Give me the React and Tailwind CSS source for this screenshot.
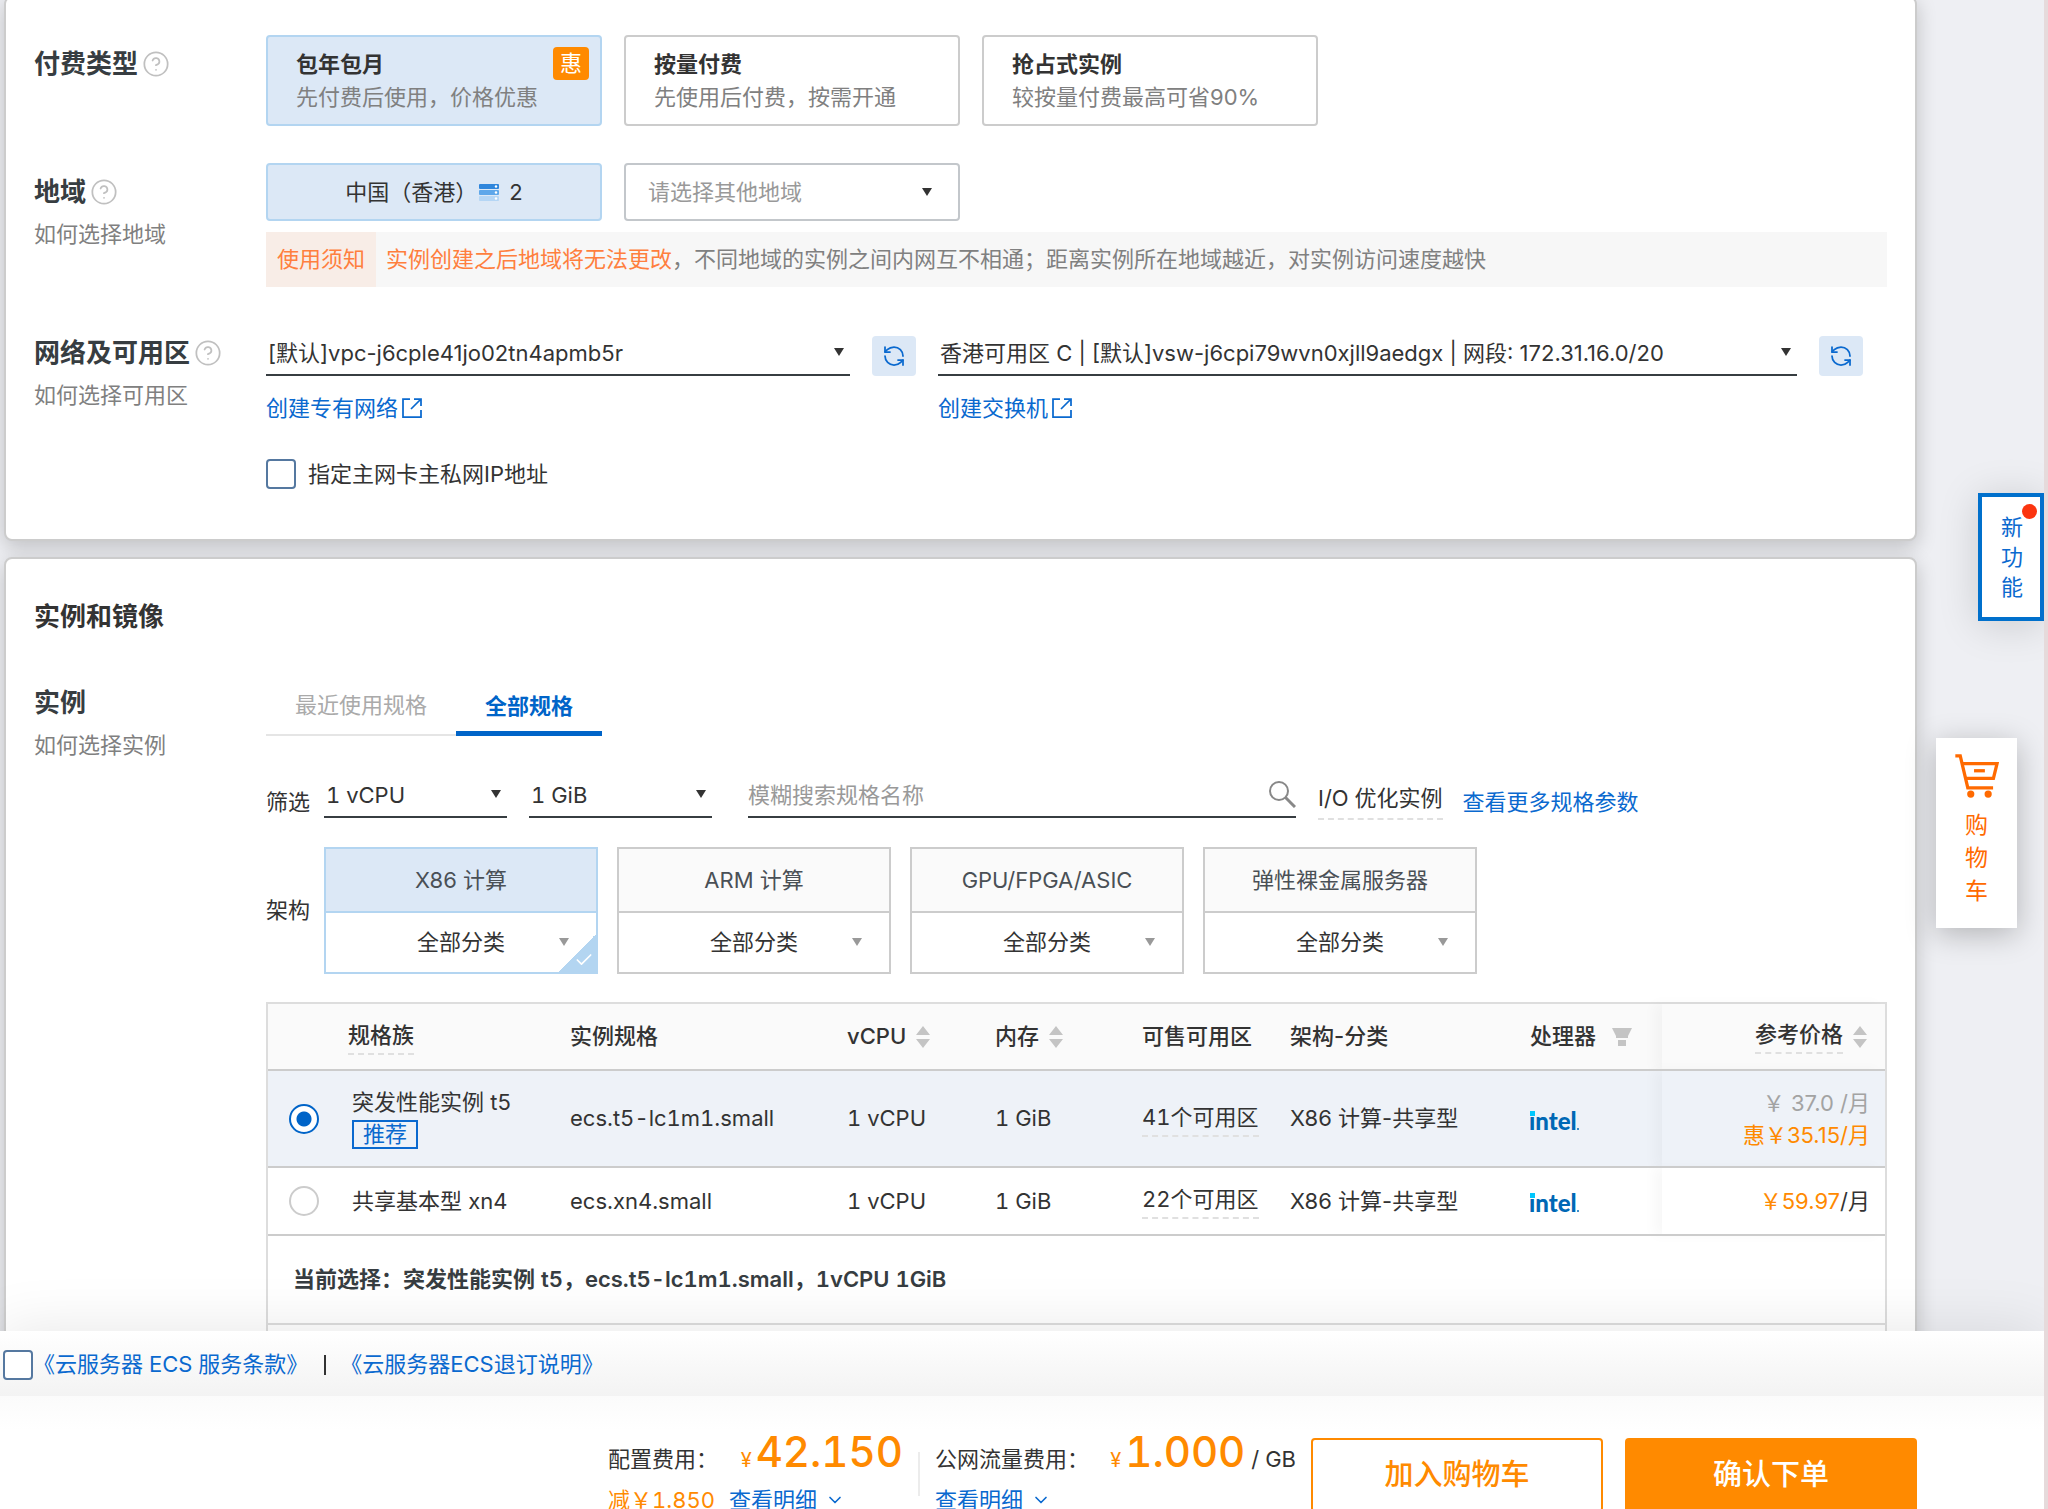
import React, { useState } from "react";
import { CircleQuestionMark, RefreshCcw, ChevronDown, Check } from "lucide-react";

const payTypes = [
  { id: "prepaid", title: "包年包月", desc: "先付费后使用，价格优惠", sale: true },
  { id: "postpaid", title: "按量付费", desc: "先使用后付费，按需开通" },
  { id: "spot", title: "抢占式实例", desc: "较按量付费最高可省90%" },
];

const archTypes = ["X86 计算", "ARM 计算", "GPU/FPGA/ASIC", "弹性裸金属服务器"];

const specs = [
  {
    id: "ecs.t5-lc1m1.small",
    family: "突发性能实例 t5",
    recommended: true,
    zones: "41个可用区",
    oldPrice: "￥ 37.0 /月",
    price: "惠￥35.15/月",
  },
  {
    id: "ecs.xn4.small",
    family: "共享基本型 xn4",
    zones: "22个可用区",
    price: "￥59.97",
    unit: "/月",
  },
];

const Caret = ({ className = "" }) => (
  <svg viewBox="0 0 10 8" className={`pointer-events-none h-2 w-2.5 ${className}`} fill="currentColor" aria-hidden="true">
    <path d="M0 0h10L5 8z" />
  </svg>
);

const ExternalIcon = () => (
  <svg viewBox="0 0 20 20" className="h-5 w-5" fill="none" stroke="currentColor" strokeWidth="1.75" aria-hidden="true">
    <path d="M8 1H1v18h18v-7" />
    <path d="M12 1h7v7M19 1 9 11" />
  </svg>
);

const ServerIcon = () => (
  <svg viewBox="0 0 20 18" className="mt-0.5 h-[18px] w-5" aria-hidden="true">
    <rect width="20" height="5" rx="1" fill="#2f86dc" />
    <rect y="6" width="20" height="5" rx="1" fill="#5ea7ea" />
    <rect y="12" width="20" height="5" rx="1" fill="#b5d6f5" />
    <circle cx="17" cy="2.5" r="1.2" fill="#fff" />
    <circle cx="17" cy="8.5" r="1.2" fill="#fff" />
    <circle cx="17" cy="14.5" r="1.2" fill="#fff" />
  </svg>
);

const SearchIcon = () => (
  <svg viewBox="0 0 28 28" className="h-7 w-7" fill="none" stroke="currentColor" strokeWidth="2" aria-hidden="true">
    <circle cx="11" cy="11" r="9" />
    <path d="M17.500 17.500 27 27" strokeWidth="3" />
  </svg>
);

const CartIcon = () => (
  <svg viewBox="0 0 132 134" className="h-11 w-11" fill="none" stroke="currentColor" strokeWidth="10" aria-hidden="true">
    <path d="M0 6h15l23 97h77" />
    <path d="M23 29h104l-11 45H32" />
    <path d="M57 51h33" />
    <circle cx="47" cy="122" r="11" fill="currentColor" stroke="none" />
    <circle cx="100" cy="122" r="11" fill="currentColor" stroke="none" />
  </svg>
);

const SortIcon = () => (
  <svg viewBox="0 0 14 22" className="h-[22px] w-3.5 text-[#c4c4c4]" fill="currentColor" aria-hidden="true">
    <path d="M7 0l7 9H0zM7 22l7-9H0z" />
  </svg>
);

const FilterIcon = () => (
  <svg viewBox="0 0 20 18" className="h-[18px] w-5 text-[#c4c4c4]" fill="currentColor" aria-hidden="true">
    <path d="M0 0h20l-4 8v2H4V8zM6 12h8v6H6z" />
  </svg>
);

const IntelLogo = () => (
  <svg viewBox="0 0 60 34" className="h-[34px] w-[60px]" aria-label="intel">
    <text x="-1" y="28" fontFamily="Lato, sans-serif" fontSize="24" fontWeight="900" fill="#0068b5">
      intel
    </text>
    <rect x="0" y="9" width="5" height="5" fill="#00c7fd" />
    <circle cx="48" cy="27" r="1" fill="#0068b5" />
  </svg>
);

const RowLabel = ({ title, help, link, className = "" }) => (
  <div className={`w-[232px] shrink-0 ${className}`}>
    <div className="flex items-center gap-1 text-[26px] leading-9 font-bold text-[#373d41]">
      {title}
      {help && <CircleQuestionMark className="h-7 w-7 text-[#c0c0c0]" strokeWidth={1.5} />}
    </div>
    {link && (
      <a href="#" className="mt-2 block leading-8 text-[#808080]">
        {link}
      </a>
    )}
  </div>
);

const LineSelect = ({ label, value, className = "" }) => (
  <div className={`relative border-b-2 border-[#373d41] ${className}`}>
    <select aria-label={label} className="block h-[38px] w-full appearance-none bg-transparent px-0.5 pb-1 outline-none">
      <option>{value}</option>
    </select>
    <Caret className="absolute top-3 right-1.5" />
  </div>
);

const RefreshButton = () => (
  <button type="button" aria-label="刷新" className="flex h-10 w-11 shrink-0 items-center justify-center rounded-sm bg-[#dce8f6] text-[#0a69cf]">
    <RefreshCcw className="h-6 w-6" strokeWidth={1.75} />
  </button>
);

const BasicPanel = () => {
  const [pay, setPay] = useState("prepaid");

  return (
    <section className="-mt-1 rounded-lg border-2 border-[#cccccc] bg-white px-7 pt-[37px] pb-[49px] shadow-[0_6px_20px_rgba(0,0,0,0.2)]">
      <div className="flex">
        <RowLabel title="付费类型" help className="pt-[11px]" />
        <div className="flex gap-[22px]">
          {payTypes.map((item) => (
            <button
              key={item.id}
              type="button"
              onClick={() => setPay(item.id)}
              className={`relative w-[336px] rounded-sm border-2 px-7 pt-[11px] pb-2.5 text-left ${
                pay === item.id ? "border-[#b3d5f1] bg-[#dce8f6]" : "border-[#cccccc] bg-white"
              }`}
            >
              <span className="block leading-8 font-bold text-[#333333]">{item.title}</span>
              <span className="block leading-[34px] text-[#808080]">{item.desc}</span>
              {item.sale && (
                <span className="absolute top-2.5 right-[11px] flex h-[33px] w-9 items-center justify-center rounded-sm bg-[#ff8a00] text-white">
                  惠
                </span>
              )}
            </button>
          ))}
        </div>
      </div>

      <div className="mt-[37px] flex">
        <RowLabel title="地域" help link="如何选择地域" className="pt-[11px]" />
        <div className="min-w-0 flex-1">
          <div className="flex gap-[22px]">
            <button
              type="button"
              className="flex h-[58px] w-[336px] items-center justify-center gap-2.5 rounded-sm border-2 border-[#b3d5f1] bg-[#dce8f6]"
            >
              <span className="flex items-center gap-0.5">
                中国（香港）
                <ServerIcon />
              </span>
              2
            </button>
            <div className="relative h-[58px] w-[336px] rounded-sm border-2 border-[#c3c7cb]">
              <select aria-label="地域" className="h-full w-full appearance-none bg-transparent px-[22px] text-[#999999] outline-none">
                <option>请选择其他地域</option>
              </select>
              <Caret className="absolute top-[23px] right-[26px]" />
            </div>
          </div>
          <div className="mt-[11px] flex h-[55px] items-center bg-[#f7f7f7] text-[#808080]">
            <span className="flex h-full w-[110px] items-center justify-center bg-[#f8ede7] text-[#ff7f3e]">使用须知</span>
            <p className="pl-2.5">
              <span className="text-[#ff7f3e]">实例创建之后地域将无法更改</span>
              ，不同地域的实例之间内网互不相通；距离实例所在地域越近，对实例访问速度越快
            </p>
          </div>
        </div>
      </div>

      <div className="mt-12 flex">
        <RowLabel title="网络及可用区" help link="如何选择可用区" />
        <div className="min-w-0 flex-1 pt-px">
          <div className="flex">
            <div className="flex w-[650px] shrink-0 gap-[22px]">
              <LineSelect label="专有网络" value="[默认]vpc-j6cple41jo02tn4apmb5r" className="w-[585px]" />
              <RefreshButton />
            </div>
            <div className="ml-[22px] flex flex-1 gap-[22px] pr-6">
              <LineSelect
                label="交换机"
                value="香港可用区 C | [默认]vsw-j6cpi79wvn0xjll9aedgx | 网段: 172.31.16.0/20"
                className="flex-1"
              />
              <RefreshButton />
            </div>
          </div>
          <div className="mt-4 flex leading-8 text-[#0a69cf]">
            <a href="#" className="flex w-[672px] shrink-0 items-center gap-1">
              创建专有网络
              <ExternalIcon />
            </a>
            <a href="#" className="flex items-center gap-1">
              创建交换机
              <ExternalIcon />
            </a>
          </div>
          <label className="mt-[34px] flex items-center gap-3 leading-8">
            <input type="checkbox" className="h-[30px] w-[30px] appearance-none rounded-sm border-2 border-[#5578a0] bg-white checked:bg-[#0064c8]" />
            指定主网卡主私网IP地址
          </label>
        </div>
      </div>
    </section>
  );
};

const SpecTable = () => {
  const [selected, setSelected] = useState("ecs.t5-lc1m1.small");
  const edge = "shadow-[-8px_0_12px_rgba(0,0,0,0.03)]";

  return (
    <div className="mt-7 border-2 border-[#dddddd]">
      <table className="w-full table-fixed border-collapse text-left">
        <colgroup>
          <col className="w-[80px]" />
          <col className="w-[222px]" />
          <col className="w-[277px]" />
          <col className="w-[148px]" />
          <col className="w-[147px]" />
          <col className="w-[148px]" />
          <col className="w-[240px]" />
          <col className="w-[132px]" />
          <col />
        </colgroup>
        <thead className="bg-[#fafafa]">
          <tr className="h-[66px] border-b-2 border-[#cccccc] [&>th]:p-0 [&>th]:font-medium">
            <th aria-label="选择" />
            <th>
              <span className="inline-block border-b-2 border-dashed border-[#e0e0e0] pb-1 leading-7">规格族</span>
            </th>
            <th>实例规格</th>
            <th>
              <span className="flex items-center gap-2.5">
                vCPU <SortIcon />
              </span>
            </th>
            <th>
              <span className="flex items-center gap-2.5">
                内存 <SortIcon />
              </span>
            </th>
            <th>可售可用区</th>
            <th>架构-分类</th>
            <th>
              <span className="flex items-center gap-4">
                处理器 <FilterIcon />
              </span>
            </th>
            <th className={edge}>
              <span className="flex items-center justify-end gap-2.5 pr-[18px]">
                <span className="border-b-2 border-dashed border-[#e0e0e0] pb-1 leading-7">参考价格</span>
                <SortIcon />
              </span>
            </th>
          </tr>
        </thead>
        <tbody>
          {specs.map((spec) => (
            <tr
              key={spec.id}
              className={`border-b-2 border-[#cccccc] [&>td]:p-0 ${spec.recommended ? "h-[97px]" : "h-[68px]"} ${
                selected === spec.id ? "bg-[#eef2f8]" : "bg-white"
              }`}
            >
              <td>
                <input
                  type="radio"
                  name="spec"
                  aria-label={spec.id}
                  checked={selected === spec.id}
                  onChange={() => setSelected(spec.id)}
                  className="ml-[21px] block h-[30px] w-[30px] appearance-none rounded-full border-2 border-[#cccccc] bg-white checked:border-[#0064c8] checked:bg-[radial-gradient(circle,#0064c8_7px,#fff_8px)]"
                />
              </td>
              <td>
                <span className="block pl-1 leading-8">{spec.family}</span>
                {spec.recommended && (
                  <span className="mt-0.5 ml-1 inline-block border-2 border-[#0a69cf] px-[9px] align-top leading-[25px] text-[#0a69cf]">推荐</span>
                )}
              </td>
              <td className="tabular-nums">{spec.id}</td>
              <td className="tabular-nums">1 vCPU</td>
              <td className="tabular-nums">1 GiB</td>
              <td className="tabular-nums">
                <span className="inline-block border-b-2 border-dashed border-[#e0e0e0] pb-1 leading-7">{spec.zones}</span>
              </td>
              <td>X86 计算-共享型</td>
              <td>
                <IntelLogo />
              </td>
              <td className={`text-right ${edge}`}>
                <div className="pr-[15px] leading-8">
                  {spec.oldPrice && <span className="block text-[#a3a3a3]">{spec.oldPrice}</span>}
                  <span className="text-[#ff8a00]">{spec.price}</span>
                  {spec.unit}
                </div>
              </td>
            </tr>
          ))}
        </tbody>
      </table>
      <p className="border-b-2 border-[#dddddd] px-[25px] pt-[27px] pb-7 leading-8 font-semibold text-[#373d41] tabular-nums">
        当前选择：突发性能实例 t5，ecs.t5-lc1m1.small，1vCPU 1GiB
      </p>
      <div className="h-20" />
    </div>
  );
};

const InstancePanel = () => {
  const [arch, setArch] = useState(archTypes[0]);

  return (
    <section className="mt-4 rounded-lg border-2 border-[#cccccc] bg-white px-7 pt-10 shadow-[0_6px_20px_rgba(0,0,0,0.2)]">
      <h2 className="text-[26px] leading-9 font-bold">实例和镜像</h2>
      <div className="mt-[50px] flex">
        <RowLabel title="实例" link="如何选择实例" />
        <div className="min-w-0 flex-1">
          <div className="flex h-[51px]">
            <button type="button" className="w-[190px] border-b-2 border-[#e5e5e5] pb-2 text-[#aaaaaa]">
              最近使用规格
            </button>
            <button type="button" className="w-[146px] border-b-[5px] border-[#0064c8] pb-1 font-bold text-[#0064c8]">
              全部规格
            </button>
          </div>

          <div className="mt-[42px] flex items-start tabular-nums">
            <span className="w-[58px] pt-2 leading-8">筛选</span>
            <LineSelect label="vCPU" value="1 vCPU" className="w-[183px]" />
            <LineSelect label="内存" value="1 GiB" className="ml-[22px] w-[183px]" />
            <div className="ml-9 flex h-10 w-[548px] border-b-2 border-[#373d41]">
              <input
                type="text"
                aria-label="规格名称"
                placeholder="模糊搜索规格名称"
                className="min-w-0 flex-1 pb-1 outline-none placeholder:text-[#999999]"
              />
              <button type="button" aria-label="搜索" className="self-start pt-0.5 text-[#888888]">
                <SearchIcon />
              </button>
            </div>
            <span className="ml-[22px] border-b-2 border-dashed border-[#e0e0e0] pt-1 pb-1 leading-8">I/O 优化实例</span>
            <a href="#" className="ml-5 pt-2 leading-8 text-[#0a69cf]">
              查看更多规格参数
            </a>
          </div>

          <div className="mt-[27px] flex items-center">
            <span className="w-[58px]">架构</span>
            <div className="flex gap-[19px]">
              {archTypes.map((name) => {
                const active = arch === name;
                return (
                  <div key={name} className={`relative w-[274px] border-2 ${active ? "border-[#b3d5f1]" : "border-[#cccccc]"}`}>
                    <button
                      type="button"
                      onClick={() => setArch(name)}
                      className={`block h-16 w-full border-b-2 text-[#4a5056] ${
                        active ? "border-[#b3d5f1] bg-[#dce8f6]" : "border-[#cccccc] bg-[#fafafa]"
                      }`}
                    >
                      {name}
                    </button>
                    <select aria-label={name} className="block h-[59px] w-full appearance-none bg-white px-8 [text-align-last:center] outline-none">
                      <option>全部分类</option>
                    </select>
                    <Caret className="absolute right-[27px] bottom-[26px] text-[#999999]" />
                    {active && (
                      <span className="absolute right-0 bottom-0 flex h-[38px] w-[38px] items-end justify-end bg-[linear-gradient(135deg,transparent_50%,#b3d5f1_50%)] pr-0.5 pb-0.5">
                        <Check className="h-5 w-5 text-white" strokeWidth={2} />
                      </span>
                    )}
                  </div>
                );
              })}
            </div>
          </div>

          <SpecTable />
        </div>
      </div>
    </section>
  );
};

const FooterBar = () => (
  <footer className="relative z-10 bg-white tabular-nums shadow-[0_0_60px_rgba(0,0,0,0.1)]">
    <div className="flex h-[65px] items-center bg-linear-to-b from-white to-[#f3f3f3] pt-0.5 pl-[3px] text-[#0a69cf]">
      <input
        type="checkbox"
        aria-label="同意服务条款"
        className="h-[30px] w-[30px] appearance-none rounded-sm border-2 border-[#5578a0] bg-white checked:bg-[#0064c8]"
      />
      <a href="#">《云服务器 ECS 服务条款》</a>
      <span className="mr-3.5 ml-4 h-5 w-0.5 bg-[#333333]" />
      <a href="#">《云服务器ECS退订说明》</a>
    </div>
    <div className="flex h-[113px] items-start justify-end bg-linear-to-b from-[#fbfbfb] to-white to-30% pr-[127px]">
      <div className="w-[310px] pt-[31px]">
        <div className="flex items-baseline leading-[50px]">
          配置费用：
          <span className="ml-auto text-xl text-[#ff8a00]">¥</span>
          <span className="mr-[15px] ml-1 text-[42px] font-medium text-[#ff8a00]">42.150</span>
        </div>
        <div className="flex items-center leading-8 text-[#0a69cf]">
          <span className="mr-3.5 text-[#ff8a00]">减￥1.850</span>
          <a href="#" className="flex items-center gap-2">
            查看明细
            <ChevronDown className="h-5 w-5" strokeWidth={2} />
          </a>
        </div>
      </div>
      <span className="mt-14 h-11 w-0.5 bg-[#ececec]" />
      <div className="ml-[15px] w-[361px] pt-[31px]">
        <div className="flex items-baseline leading-[50px]">
          公网流量费用：
          <span className="ml-auto text-xl text-[#ff8a00]">¥</span>
          <span className="ml-1 text-[42px] font-medium text-[#ff8a00]">1.000</span>
          <span className="ml-1.5">/ GB</span>
        </div>
        <a href="#" className="flex items-center gap-2 leading-8 text-[#0a69cf]">
          查看明细
          <ChevronDown className="h-5 w-5" strokeWidth={2} />
        </a>
      </div>
      <button type="button" className="mt-[42px] ml-[15px] h-[74px] w-[292px] rounded-sm border-2 border-[#ff8a00] bg-white text-[29px] font-medium text-[#ff8a00]">
        加入购物车
      </button>
      <button type="button" className="mt-[42px] ml-[22px] h-[74px] w-[292px] rounded-sm bg-[#ff8a00] text-[29px] font-medium text-white">
        确认下单
      </button>
    </div>
  </footer>
);

const App = () => {
  return (
    <div className="relative flex h-screen flex-col overflow-hidden border-r-4 border-[#e6dadb] bg-[#eeeff3] font-[Inter,'Noto_Sans_CJK_SC',sans-serif] text-[22px] text-[#333333]">
      <main className="min-h-0 flex-1 overflow-hidden pr-[127px] pl-1">
        <BasicPanel />
        <InstancePanel />
      </main>

      <button
        type="button"
        className="absolute top-[493px] right-0 flex w-[66px] flex-col items-center border-4 border-[#0070cc] bg-white pt-[15px] pb-[15px] pl-0.5 leading-[30px] text-[#0a69cf] shadow-[0_4px_40px_rgba(0,0,0,0.15)]"
      >
        <span className="w-[22px]">新功能</span>
        <span className="absolute top-[7px] right-[3px] h-[15px] w-[15px] rounded-full bg-[#fb3510]" />
      </button>
      <a
        href="#"
        className="absolute top-[738px] right-[27px] flex w-[81px] flex-col items-center bg-white pt-4 pb-5 leading-[33px] text-[#ff6a00] shadow-[0_6px_30px_rgba(0,0,0,0.25)]"
      >
        <CartIcon />
        <span className="mt-[11px] w-[23px] text-[23px]">购物车</span>
      </a>

      <FooterBar />
    </div>
  );
};

export default App;
